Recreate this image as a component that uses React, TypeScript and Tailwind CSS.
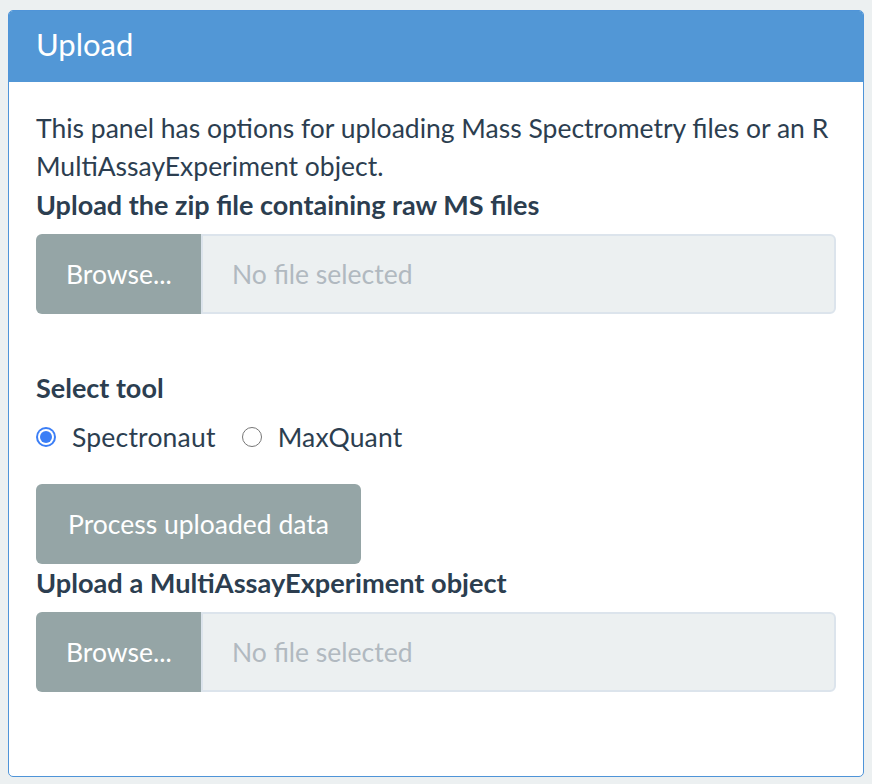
import { useState } from 'react'

const font = { fontFamily: 'Lato, "Noto Sans", sans-serif' }

function FileInput() {
  return (
    <div className="flex h-[80px] w-full">
      <div className="flex w-[165px] shrink-0 items-center rounded-l-[6px] bg-[#95a5a6] pl-[30px] text-white">
        Browse...
      </div>
      <div className="flex flex-1 items-center rounded-r-[6px] border-2 border-[#dce4ec] bg-[#ecf0f1] pl-[29px] text-[#b1b9c0]">
        No file selected
      </div>
    </div>
  )
}

function Radio({ label, checked, onClick }: { label: string; checked: boolean; onClick: () => void }) {
  return (
    <label className="flex cursor-pointer items-center" onClick={onClick}>
      {checked ? (
        <span className="flex h-[20px] w-[20px] items-center justify-center rounded-full bg-[#3b7ef6]">
          <span className="flex h-[16px] w-[16px] items-center justify-center rounded-full bg-white">
            <span className="h-[12px] w-[12px] rounded-full bg-[#3b7ef6]" />
          </span>
        </span>
      ) : (
        <span className="h-[20px] w-[20px] rounded-full border-[1.5px] border-[#767676] bg-white" />
      )}
      <span className="ml-[16px] tracking-[0.2px]">{label}</span>
    </label>
  )
}

export default function App() {
  const [tool, setTool] = useState('spectronaut')

  return (
    <div className="min-h-[784px] bg-[#ecf0f1] px-[8px] pt-[10px]" style={font}>
      <div className="h-[767px] overflow-hidden rounded-[5px] border border-[#4f94d8] bg-white">
        <div className="h-[71px] bg-[#5297d6] px-[27px] pt-[13px] text-[31px] leading-[40px] text-white">
          Upload
        </div>
        <div className="px-[27px] pt-[27px] text-[26.5px] leading-[38.4px] text-[#2c3e50]">
          <p>This panel has options for uploading Mass Spectrometry files or an R MultiAssayExperiment object.</p>
          <p className="mb-[10px] text-[27px] font-bold">Upload the zip file containing raw MS files</p>
          <FileInput />

          <p className="mt-[55px] mb-[10px] text-[27px] font-bold">Select tool</p>
          <div className="flex gap-[26px]">
            <Radio label="Spectronaut" checked={tool === 'spectronaut'} onClick={() => setTool('spectronaut')} />
            <Radio label="MaxQuant" checked={tool === 'maxquant'} onClick={() => setTool('maxquant')} />
          </div>

          <button className="mt-[28px] flex h-[80px] items-center rounded-[6px] bg-[#95a5a6] px-[32px] text-white">
            Process uploaded data
          </button>
          <p className="mb-[10px] text-[27.2px] font-bold">Upload a MultiAssayExperiment object</p>
          <FileInput />
        </div>
      </div>
    </div>
  )
}
